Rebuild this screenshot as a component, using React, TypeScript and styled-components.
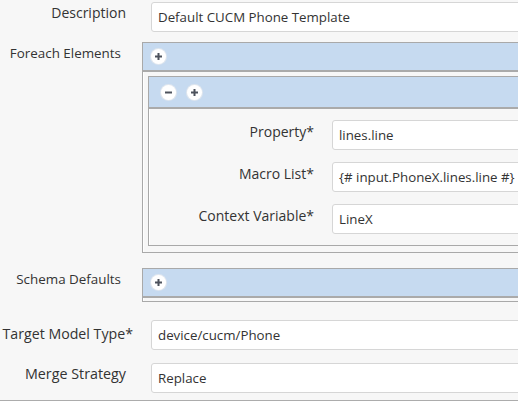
import * as React from 'react'
import styled, { createGlobalStyle } from 'styled-components'

const GlobalStyle = createGlobalStyle`
    html, body {
        margin: 0;
        padding: 0;
        background: #f7f7f7;
    }
    body {
        font-family: "Open Sans", "Liberation Sans", sans-serif;
        font-size: 14px;
        color: #333333;
    }
`

const Page = styled.div`
    width: 518px;
    height: 401px;
    overflow: hidden;
    background: #f7f7f7;
`
const Form = styled.div`
    width: 600px;
    display: flex;
    flex-direction: column;
`
const Row = styled.div<{ $col: number; $mb?: number }>`
    display: grid;
    grid-template-columns: ${(p) => p.$col}px 1fr;
    align-items: start;
    margin-bottom: ${(p) => p.$mb ?? 0}px;
`
const Label = styled.div<{ $pt?: number; $pr?: number; $size?: number }>`
    text-align: right;
    line-height: 20px;
    font-size: ${(p) => p.$size ?? 14}px;
    padding-top: ${(p) => p.$pt ?? 2}px;
    padding-right: ${(p) => p.$pr ?? 16}px;
    white-space: nowrap;
`
const Star = styled.span`
    margin-right: -7px;
`
const Input = styled.div<{ $mt?: number }>`
    margin-top: ${(p) => p.$mt ?? 0}px;
    margin-left: 9px;
    height: 30px;
    box-sizing: border-box;
    background: #ffffff;
    border: 1px solid #d6d6d6;
    border-radius: 3px;
    padding: 0 6px;
    display: flex;
    align-items: center;
    white-space: nowrap;
    font-size: 13.3px;
    color: #333333;
`
const Box = styled.div`
    border: 1px solid #a9a9a9;
    border-right: none;
    box-shadow: inset 1px 1px 0 #ffffff;
    background: #f7f7f7;
`
const BoxHeader = styled.div<{ $h: number; $pl: number }>`
    height: ${(p) => p.$h}px;
    background: #c6daf0;
    border-bottom: 2px solid #aaaaaa;
    display: flex;
    align-items: center;
    gap: 11px;
    padding-left: ${(p) => p.$pl}px;
`
const BoxBody = styled.div<{ $pad: string }>`
    padding: ${(p) => p.$pad};
`
const InnerRows = styled.div`
    padding: 11px 0 11px 0;
    display: flex;
    flex-direction: column;
    gap: 12px;
`
const RoundButton = styled.span`
    width: 15px;
    height: 15px;
    border-radius: 50%;
    background: #ffffff;
    box-shadow: 0 0 0 1px #dfe6ee;
    display: flex;
    align-items: center;
    justify-content: center;
`
const BottomLine = styled.div`
    height: 2px;
    background: #acacac;
`

function Plus() {
    return (
        <RoundButton>
            <svg width="9" height="9" viewBox="0 0 9 9">
                <path d="M4.5 1v7M1 4.5h7" stroke="#4d525c" strokeWidth="2" />
            </svg>
        </RoundButton>
    )
}
function Minus() {
    return (
        <RoundButton>
            <svg width="9" height="9" viewBox="0 0 9 9">
                <path d="M1 4.5h7" stroke="#4d525c" strokeWidth="2" />
            </svg>
        </RoundButton>
    )
}

const innerFields = [
    { label: 'Property', value: 'lines.line' },
    { label: 'Macro List', value: '{# input.PhoneX.lines.line #}' },
    { label: 'Context Variable', value: 'LineX' },
]

export default function App() {
    return (
        <Page>
            <GlobalStyle />
            <Form>
                <Row $col={142} $mb={10}>
                    <Label $pt={3}>Description</Label>
                    <Input $mt={2}>Default CUCM Phone Template</Input>
                </Row>

                <Row $col={142} $mb={15}>
                    <Label $pt={1} $pr={21} $size={13.4}>Foreach Elements</Label>
                    <Box>
                        <BoxHeader $h={27} $pl={8}><Plus /></BoxHeader>
                        <BoxBody $pad="4px 0 6px 5px">
                            <Box>
                                <BoxHeader $h={30} $pl={12}><Minus /><Plus /></BoxHeader>
                                <InnerRows>
                                    {innerFields.map((f) => (
                                        <Row $col={174} key={f.label}>
                                            <Label $pt={2} $pr={16}>{f.label}<Star>*</Star></Label>
                                            <Input>{f.value}</Input>
                                        </Row>
                                    ))}
                                </InnerRows>
                            </Box>
                        </BoxBody>
                    </Box>
                </Row>

                <Row $col={142} $mb={18}>
                    <Label $pt={1} $pr={21} $size={13.4}>Schema Defaults</Label>
                    <Box>
                        <BoxHeader $h={27} $pl={8}><Plus /></BoxHeader>
                        <BoxBody $pad="3px 0 0 0" />
                    </Box>
                </Row>

                <Row $col={142} $mb={13}>
                    <Label $pt={4} $size={14.2}>Target Model Type<Star>*</Star></Label>
                    <Input>device/cucm/Phone</Input>
                </Row>

                <Row $col={142} $mb={7}>
                    <Label $pt={1} $size={14.3}>Merge Strategy</Label>
                    <Input>Replace</Input>
                </Row>

                <BottomLine />
            </Form>
        </Page>
    )
}
